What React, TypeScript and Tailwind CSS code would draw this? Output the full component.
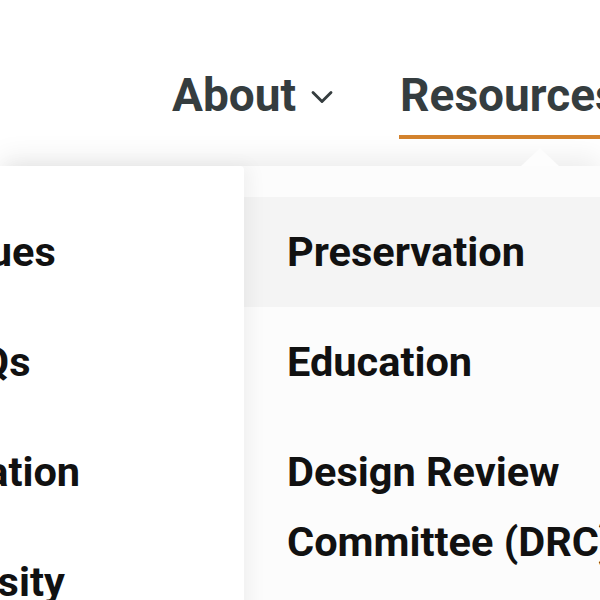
import { ChevronDown } from "lucide-react"

const leftItems = ["Issues", "FAQs", "Citation", "Varsity"]

const rightItems = [
  { label: "Preservation", active: true },
  { label: "Education", active: false },
  { label: "Design Review Committee (DRC)", active: false },
]

export default function App() {
  return (
    <div
      className="w-[600px] h-[600px] overflow-hidden bg-white relative"
      style={{ fontFamily: "Roboto, 'Liberation Sans', sans-serif" }}
    >
      {/* Top nav */}
      <nav className="flex items-start h-[166px] pl-[172px] text-[#353d3f] font-bold text-[46px] whitespace-nowrap">
        <div className="flex items-center gap-2 pt-[68px]">
          <span className="leading-[54px]">About</span>
          <ChevronDown className="w-9 h-9 mt-1" strokeWidth={1.9} />
        </div>
        <div className="ml-[60px] pt-[68px]">
          <span className="block leading-[54px] pr-10">Resources</span>
          <div className="mt-[13px] h-1 w-[400px] -ml-px bg-[#d4832e]" />
        </div>
      </nav>

      {/* Dropdown */}
      <div className="relative flex shadow-[0_-8px_26px_rgba(0,0,0,0.08)] bg-[#fcfcfc]">
        <div className="absolute -top-[18px] left-[521px] w-0 h-0 border-l-[19px] border-r-[19px] border-b-[18px] border-l-transparent border-r-transparent border-b-[#fdfdfd]" />

        <div className="relative z-10 w-[244px] shrink-0 bg-white pt-[31px] shadow-[6px_0_18px_rgba(0,0,0,0.05)] rounded-tr-sm overflow-hidden">
          {leftItems.map((item) => (
            <div
              key={item}
              className="h-[110px] py-5 -ml-[66px] text-[41.5px] font-bold leading-[70px] text-[#111] whitespace-nowrap"
            >
              {item}
            </div>
          ))}
        </div>

        <div className="flex-1 pt-[31px] min-w-0">
          {rightItems.map((item) => (
            <div
              key={item.label}
              className={`py-5 pl-[43px] text-[41.5px] font-bold leading-[70px] text-[#111] whitespace-nowrap ${
                item.active ? "bg-[#f4f4f4]" : ""
              }`}
            >
              {item.label === "Design Review Committee (DRC)" ? (
                <>
                  <div>Design Review</div>
                  <div>Committee (DRC)</div>
                </>
              ) : (
                item.label
              )}
            </div>
          ))}
        </div>
      </div>
    </div>
  )
}
